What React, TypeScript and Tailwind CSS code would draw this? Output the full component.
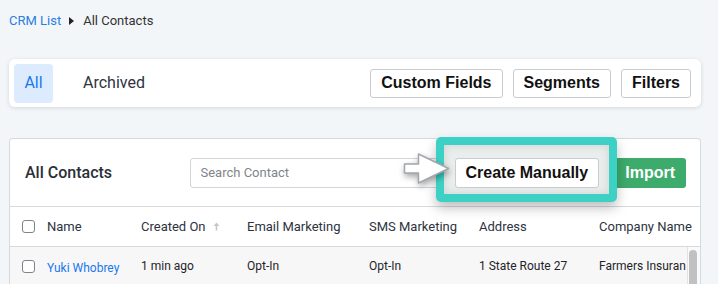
const columns = [
  { label: "Name", width: "w-[94px]" },
  { label: "Created On", width: "w-[106px]", sort: true },
  { label: "Email Marketing", width: "w-[122px]" },
  { label: "SMS Marketing", width: "w-[110px]" },
  { label: "Address", width: "w-[120px]" },
  { label: "Company Name", width: "flex-1" },
];

function Checkbox() {
  return (
    <span className="block h-[13px] w-[13px] rounded-[3px] border-[1.5px] border-[#7d848c] bg-white" />
  );
}

function OutlineButton({ children }: { children: React.ReactNode }) {
  return (
    <button className="h-[29px] rounded-[3px] border border-[#c9ccd1] bg-white px-[10px] font-['Liberation_Sans',Arial,sans-serif] text-[16px] font-bold leading-none text-[#111]">
      {children}
    </button>
  );
}

function PointerArrow() {
  return (
    <svg
      width="48"
      height="34"
      viewBox="0 0 48 34"
      className="absolute left-[393px] top-[13px] z-20 drop-shadow-[1px_3px_3px_rgba(0,0,0,0.35)]"
    >
      <path
        d="M1.5 12 L15.5 12 L15.5 2 L45.5 16.5 L15.5 31 L15.5 21 L1.5 21 Z"
        fill="#ffffff"
        stroke="#a3a7ab"
        strokeWidth="1.5"
        strokeLinejoin="round"
      />
    </svg>
  );
}

export default function App() {
  return (
    <div className="min-h-screen bg-[#f3f6f9] pl-[9px] pr-[17px] font-['Roboto',sans-serif] text-[#2d3340]">
      {/* breadcrumb */}
      <nav className="flex h-[41px] items-center text-[13px]">
        <span className="text-[#2a7de1]">CRM List</span>
        <svg width="5" height="8" viewBox="0 0 5 8" className="ml-[8px] mr-[9px]">
          <path d="M0 0 L5 4 L0 8 Z" fill="#222" />
        </svg>
        <span className="text-[#333]">All Contacts</span>
      </nav>

      {/* tabs + actions */}
      <div className="mt-[18px] flex h-[48px] items-center rounded-md bg-white px-[5px] shadow-[0_1px_4px_rgba(0,0,0,0.13)]">
        <div className="flex h-[39px] w-[39px] items-center justify-center rounded-[4px] bg-[#dcebfd] text-[16px] text-[#1a78ee]">
          All
        </div>
        <div className="ml-[30px] text-[16px] text-[#2d3340]">Archived</div>
        <div className="ml-auto mr-[5px] flex gap-[10px]">
          <OutlineButton>Custom Fields</OutlineButton>
          <OutlineButton>Segments</OutlineButton>
          <OutlineButton>Filters</OutlineButton>
        </div>
      </div>

      {/* contacts card */}
      <div className="relative mt-[31px] rounded-t-[4px] border border-b-0 border-[#d6d9de] bg-white">
        <div className="flex h-[68px] items-center border-b border-[#d6d9de] pl-[15px] pr-[14px]">
          <h2 className="text-[16px] font-medium text-[#2a2f38]">All Contacts</h2>
          <div className="ml-auto flex items-center">
            <input
              placeholder="Search Contact"
              className="h-[30px] w-[256px] rounded-[3px] border border-[#d2d5da] bg-white px-[10px] text-[13px] text-[#333] placeholder:text-[#80858c]"
            />
            <button className="relative z-20 ml-[9px] h-[30px] rounded-[3px] border border-[#c9ccd1] bg-white px-[10px] font-['Liberation_Sans',Arial,sans-serif] text-[16px] font-bold text-[#111]">
              Create Manually
            </button>
            <button className="ml-[15px] h-[30px] rounded-[3px] bg-[#3dab6b] px-[11px] font-['Liberation_Sans',Arial,sans-serif] text-[16px] font-bold text-white">
              Import
            </button>
          </div>
        </div>

        {/* highlight annotation */}
        <div className="absolute left-[426px] top-[-2px] z-10 h-[65px] w-[181px] rounded-[5px] border-[8px] border-[#3dd1c5] bg-[#e9eeed] shadow-[0_6px_12px_rgba(0,0,0,0.25),inset_0_0_8px_rgba(0,0,0,0.12)]" />
        <PointerArrow />

        {/* table header */}
        <div className="flex h-[40px] items-center border-b border-[#d6d9de] text-[13px] text-[#2d3340]">
          <div className="w-[37px] pl-[12px]">
            <Checkbox />
          </div>
          {columns.map((c) => (
            <div key={c.label} className={`${c.width} flex items-center whitespace-nowrap`}>
              {c.label}
              {c.sort && (
                <svg width="7" height="9" viewBox="0 0 7 9" className="ml-[7px]">
                  <path d="M3.5 0.5 L6.5 4 H4.3 V8.5 H2.7 V4 H0.5 Z" fill="#c4c8cc" />
                </svg>
              )}
            </div>
          ))}
        </div>

        {/* table body */}
        <div className="flex h-[38px]">
          <div className="flex flex-1 items-center overflow-hidden bg-[#f7f7f7] text-[12px] text-[#1f232a]">
            <div className="w-[37px] shrink-0 pl-[12px]">
              <Checkbox />
            </div>
            <div className="w-[94px] shrink-0 pt-[3px] text-[#1a78ee]">Yuki Whobrey</div>
            <div className="w-[106px] shrink-0">1 min ago</div>
            <div className="w-[122px] shrink-0">Opt-In</div>
            <div className="w-[110px] shrink-0">Opt-In</div>
            <div className="w-[120px] shrink-0">1 State Route 27</div>
            <div className="shrink-0 whitespace-nowrap">Farmers Insuran</div>
          </div>
          <div className="w-[13px] border-l border-[#e3e3e3] bg-[#fafafa] pl-[1px] pt-[3px]">
            <div className="h-[40px] w-[8px] rounded-full bg-[#c1c1c1]" />
          </div>
        </div>
      </div>
    </div>
  );
}
